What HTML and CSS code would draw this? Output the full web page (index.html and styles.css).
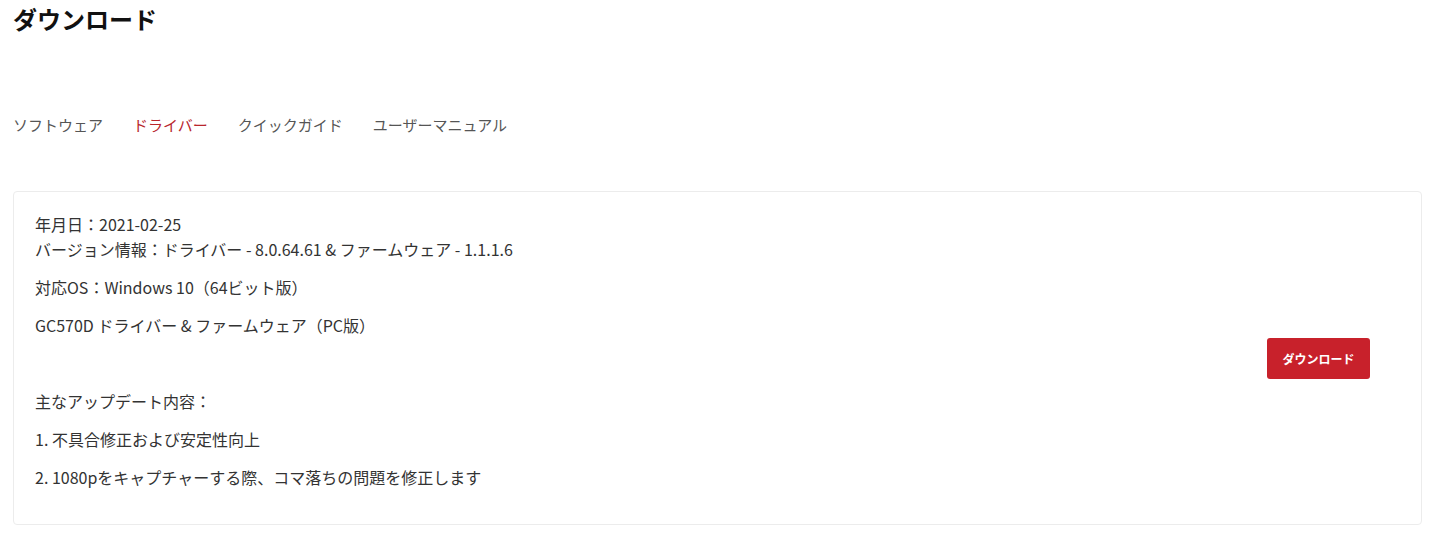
FILE: index.html
```html
<!DOCTYPE html>
<html lang="ja">
<head>
<meta charset="utf-8">
<link rel="stylesheet" href="styles.css">
</head>
<body>
<div class="page">
  <h1 class="title">ダウンロード</h1>
  <nav class="tabs">
    <span class="tab">ソフトウェア</span>
    <span class="tab active">ドライバー</span>
    <span class="tab">クイックガイド</span>
    <span class="tab">ユーザーマニュアル</span>
  </nav>
  <div class="card">
    <div class="info">
      <p>年月日：2021-02-25<br>バージョン情報：ドライバー - 8.0.64.61 &amp; ファームウェア - 1.1.1.6</p>
      <p>対応OS：Windows 10（64ビット版）</p>
      <p>GC570D ドライバー &amp; ファームウェア（PC版）</p>
      <p>&nbsp;</p>
      <p>主なアップデート内容：</p>
      <p>1. 不具合修正および安定性向上</p>
      <p>2. 1080pをキャプチャーする際、コマ落ちの問題を修正します</p>
    </div>
    <div class="action">
      <button class="btn">ダウンロード</button>
    </div>
  </div>
</div>
</body>
</html>
```
FILE: styles.css
```css
* { box-sizing: border-box; }
html, body { margin: 0; padding: 0; background: #fff; }
body {
  font-family: "Noto Sans CJK JP", "Noto Sans", sans-serif;
  color: #333;
}
.page {
  padding: 0 13px;
}
.title {
  margin: 0;
  padding-top: 3px;
  font-size: 24px;
  line-height: 32px;
  font-weight: 700;
  color: #111;
}
.tabs {
  display: flex;
  gap: 30px;
  margin-top: 79px;
  font-size: 15px;
  line-height: 22px;
  color: #555;
}
.tab.active { color: #b8262c; }
.card {
  margin-top: 55px;
  border: 1px solid #ececec;
  border-radius: 4px;
  display: flex;
  align-items: flex-start;
  padding: 20px 51px 20px 21px;
  height: 334px;
}
.info {
  flex: 1;
  font-size: 16px;
  line-height: 25px;
  color: #333;
}
.info p { margin: 0 0 13px; }
.info p:last-child { margin-bottom: 0; }
.action {
  align-self: center;
}
.btn {
  display: block;
  width: 103px;
  height: 41px;
  background: #c8212b;
  color: #fff;
  border: none;
  border-radius: 3px;
  font-family: "Noto Sans CJK JP", sans-serif;
  font-weight: 700;
  font-size: 12px;
  padding: 0;
}
```
